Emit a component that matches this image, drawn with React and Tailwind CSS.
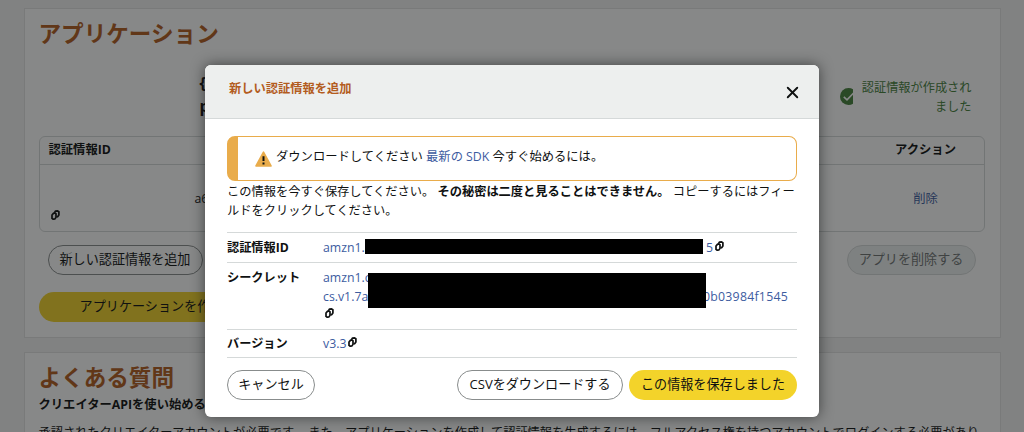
import { X } from 'lucide-react'

const CopyIcon = ({ className = '' }) => (
  <svg viewBox="0 0 9 10" className={`w-[9px] h-[10px] shrink-0 ${className}`} fill="none" stroke="#0f1111" strokeWidth="1.7" strokeLinejoin="round">
    <path d="M2.4 3.4 3.6 2.9 5 3.8V7.4L4 8.9 2.2 9.2 1 8.4V5Z" />
    <path d="M3.6 2.4 4.5 1.1 6.6.9 7.9 1.7V5L6.8 6.6 5.6 6.8" />
  </svg>
)

const WarningIcon = () => (
  <svg viewBox="0 0 17 16" className="w-[17px] h-4 shrink-0">
    <path d="M8.5 1.2 16 15H1Z" fill="#e9ac4b" stroke="#e9ac4b" strokeWidth="1.6" strokeLinejoin="round" />
    <path d="M8.5 5.2v4.8M8.5 11.4v2" stroke="#0f1111" strokeWidth="2" />
  </svg>
)

const SuccessIcon = () => (
  <svg viewBox="0 0 13 17" className="w-[13px] h-[17px] shrink-0 overflow-hidden">
    <circle cx="8.5" cy="8.5" r="8.5" fill="#45803b" />
    <path d="M3.8 8.8 7 11.8 13.6 5" fill="none" stroke="#fff" strokeWidth="1.6" />
  </svg>
)

const PillButton = ({ className = '', children }) => (
  <button className={`flex items-center justify-center h-[30px] shrink-0 rounded-full text-[13.1px] whitespace-nowrap ${className}`}>{children}</button>
)

const Field = ({ label, className = '', children }) => (
  <div className={`flex border-b border-[#d5d9d9] leading-[19px] ${className}`}>
    <div className="w-24 shrink-0 text-[12.2px] font-bold">{label}</div>
    <div className="relative flex-1 text-[#3d5c9f]">{children}</div>
  </div>
)

const Applications = () => (
  <section className="h-[330px] border border-[#e3e3e3] bg-white pl-[14px] pr-[15px] pt-2">
    <h2 className="h-[34px] leading-[34px] text-[22.6px] font-bold text-[#b35c1e]">アプリケーション</h2>
    <div className="flex h-[85px] pt-[21px]">
      <div className="w-[161px]" />
      <div className="flex-1 text-[16px] leading-[23px] font-bold">
        <div>{'{'}</div>
        <div>p</div>
      </div>
      <div className="flex items-start gap-2 pr-[13px] pt-[7px] text-[#45803b]">
        <div className="pt-[9px]"><SuccessIcon /></div>
        <p className="w-[111px] text-right text-[12.2px] leading-[18.5px]">認証情報が作成されました</p>
      </div>
    </div>

    <div className="h-24 rounded-md border border-[#d5d9d9]">
      <div className="flex h-[28px] items-center border-b border-[#d5d9d9] font-bold">
        <div className="flex-1 pl-[9px]">認証情報ID</div>
        <div className="w-[116px] text-center">アクション</div>
      </div>
      <div className="flex h-[66px]">
        <div className="flex-1">
          <div className="pl-[155px] pt-6 leading-[19px]">a6</div>
          <CopyIcon className="ml-[11px] mt-[2px]" />
        </div>
        <div className="w-[116px] pt-6 text-center leading-[19px] text-[#3d5c9f]">削除</div>
      </div>
    </div>

    <div className="flex justify-between pt-[13px] pl-[9px] pr-[9px]">
      <PillButton className="w-[155px] border border-[#888c8c]">新しい認証情報を追加</PillButton>
      <PillButton className="w-[129px] border border-[#d5d9d9] bg-[#edf0f0] text-[#6f7373]">アプリを削除する</PillButton>
    </div>
    <div className="pt-[17px]">
      <PillButton className="w-[226px] bg-[#f3d32a]">アプリケーションを作成</PillButton>
    </div>
  </section>
)

const Faq = () => (
  <section className="mt-[14px] h-[120px] border border-[#e3e3e3] bg-white px-[14px] pt-2">
    <h2 className="h-[34px] leading-[34px] text-[22.6px] font-bold text-[#b35c1e]">よくある質問</h2>
    <h3 className="leading-[19px] font-bold">クリエイターAPIを使い始めるには</h3>
    <p className="pt-[9px] leading-[19px] whitespace-nowrap text-[12.23px]">
      承認されたクリエイターアカウントが必要です。 また、アプリケーションを作成して認証情報を生成するには、フルアクセス権を持つアカウントでログインする必要があり
    </p>
  </section>
)

const CredentialModal = () => (
  <div className="absolute left-[205px] top-[65px] w-[614px] h-[352px] overflow-hidden rounded-md bg-white">
    <div className="flex h-[54px] items-start justify-between border-b border-[#d5d9d9] bg-[#edefee] pl-6 pr-[17px]">
      <h1 className="pt-[14px] text-[12.25px] leading-[19px] font-bold text-[#b35c1e]">新しい認証情報を追加</h1>
      <button className="pt-[18px]"><X size={19} strokeWidth={2.4} /></button>
    </div>

    <div className="px-[22px] pt-[17px]">
      <div className="flex h-[45px] items-center rounded-lg border border-l-[11px] border-[#e9ac4b] pb-[2px] pl-[17px]">
        <div className="pt-[2px]"><WarningIcon /></div>
        <p className="pl-1">
          ダウンロードしてください <a className="text-[#3d5c9f]">最新の SDK</a> 今すぐ始めるには。
        </p>
      </div>
      <p className="pt-px text-[12.24px] leading-[19px] whitespace-nowrap">
        この情報を今すぐ保存してください。 <b>その秘密は二度と見ることはできません。</b> コピーするにはフィー<br />ルドをクリックしてください。
      </p>

      <div className="mt-[12px] border-t border-[#d5d9d9]">
        <Field label="認証情報ID" className="h-[30px] pt-[5px]">
          <div className="flex">
            <span className="w-[383px]">amzn1.a</span>
            <span>5</span>
            <CopyIcon className="ml-[2px] mt-[3px]" />
          </div>
          <div className="absolute left-[42px] top-[1px] h-[15px] w-[338px] bg-black" />
        </Field>
        <Field label="シークレット" className="h-[67px] pt-[5px]">
          <div>amzn1.c</div>
          <div className="flex">
            <span className="w-[380px]">cs.v1.7a</span>
            <span className="tracking-[0.25px]">0b03984f1545</span>
          </div>
          <CopyIcon className="ml-[2px] mt-[2px]" />
          <div className="absolute left-[45px] top-[5px] h-[35px] w-[338px] bg-black" />
        </Field>
        <Field label="バージョン" className="h-[28px] pt-1">
          <div className="flex">
            v3.3
            <CopyIcon className="ml-[2px] mt-[3px]" />
          </div>
        </Field>
      </div>

      <div className="flex gap-[6px] pt-3">
        <PillButton className="mr-auto w-[88px] border border-[#888c8c]">キャンセル</PillButton>
        <PillButton className="w-[166px] border border-[#888c8c]">CSVをダウンロードする</PillButton>
        <PillButton className="w-[168px] bg-[#f3d32a]">この情報を保存しました</PillButton>
      </div>
    </div>
  </div>
)

export default function App() {
  return (
    <div className="relative h-[432px] w-[1024px] overflow-hidden bg-[#f3f3f3] font-['Open_Sans','Noto_Sans_CJK_JP',sans-serif] text-[12.3px] text-[#0f1111]">
      <main className="mx-auto w-[977px] pt-2">
        <Applications />
        <Faq />
      </main>
      <div className="absolute inset-0 bg-[#0f1111]/50" />
      <div className="absolute left-[205px] top-[65px] h-[352px] w-[614px] rounded-md shadow-[0_0_14px_rgba(15,17,17,0.6)]" />
      <CredentialModal />
    </div>
  )
}
